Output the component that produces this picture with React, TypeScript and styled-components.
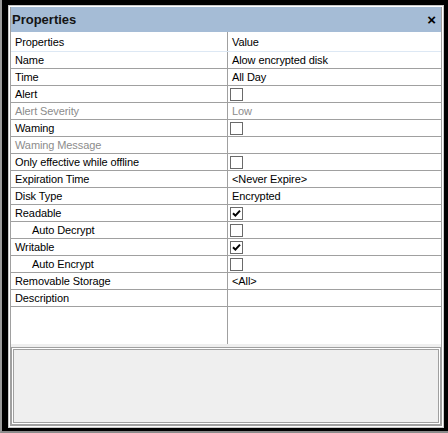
import React from 'react'
import styled, { createGlobalStyle } from 'styled-components'

const GlobalStyle = createGlobalStyle`
  html, body {
    margin: 0;
    padding: 0;
    background: #000;
  }
  body {
    font-family: "Liberation Sans", Arial, sans-serif;
    font-size: 11px;
  }
`

interface Row {
  label: string
  value?: string
  check?: boolean
  disabled?: boolean
  indent?: boolean
}

const rows: Row[] = [
  { label: 'Name', value: 'Alow encrypted disk' },
  { label: 'Time', value: 'All Day' },
  { label: 'Alert', check: false },
  { label: 'Alert Severity', value: 'Low', disabled: true },
  { label: 'Waming', check: false },
  { label: 'Waming Message', value: '', disabled: true },
  { label: 'Only effective while offline', check: false },
  { label: 'Expiration Time', value: '<Never Expire>' },
  { label: 'Disk Type', value: 'Encrypted' },
  { label: 'Readable', check: true },
  { label: 'Auto Decrypt', check: false, indent: true },
  { label: 'Writable', check: true },
  { label: 'Auto Encrypt', check: false, indent: true },
  { label: 'Removable Storage', value: '<All>' },
  { label: 'Description', value: '' },
]

const Window = styled.div`
  box-sizing: border-box;
  width: 448px;
  height: 433px;
  background: #000;
  border-left: 2px solid #9a9a9a;
  border-bottom: 2px solid #8a8a8a;
  padding: 5px 4px 3px 6px;
  display: flex;
`

const Frame = styled.div`
  flex: 1;
  display: flex;
  border: 1px solid #c8c8c8;
  background: #fff;
  padding: 1px;
`

const Panel = styled.div`
  flex: 1;
  display: flex;
  flex-direction: column;
  border-left: 1px solid #a0a0a0;
  border-right: 1px solid #a0a0a0;
  border-bottom: 1px solid #a0a0a0;
  background: #fff;
`

const TitleBar = styled.div`
  height: 25px;
  background: #a5bcd6;
  display: flex;
  align-items: center;
  justify-content: space-between;
  padding: 0 5px 0 1px;
  font-weight: bold;
  font-size: 13px;
  color: #141414;
`

const Close = styled.span`
  font-size: 15px;
  font-weight: bold;
  line-height: 1;
  color: #000;
`

const Grid = styled.div`
  display: flex;
  flex-direction: column;
  height: 312px;
  background: linear-gradient(to right, transparent 216px, #a0a0a0 216px, #a0a0a0 217px, transparent 217px);
`

const HeaderRow = styled.div`
  display: grid;
  grid-template-columns: 217px 1fr;
  height: 20px;
  border-bottom: 1px solid #dde8f4;
  box-sizing: border-box;
  align-items: center;
  color: #1e1e1e;
`

const GridRow = styled.div`
  display: grid;
  grid-template-columns: 216px 1px 1fr;
  height: 17px;
  border-bottom: 1px solid #a0a0a0;
  box-sizing: border-box;
  align-items: center;
`

const Divider = styled.div`
  height: 100%;
  background: #a0a0a0;
`

const Label = styled.div<{ $disabled?: boolean; $indent?: boolean }>`
  padding-left: ${({ $indent }) => ($indent ? 21 : 4)}px;
  color: ${({ $disabled }) => ($disabled ? '#8c8c8c' : '#000')};
  white-space: nowrap;
  line-height: 16px;
  letter-spacing: -0.1px;
`

const Value = styled.div<{ $disabled?: boolean }>`
  padding-left: 4px;
  color: ${({ $disabled }) => ($disabled ? '#8c8c8c' : '#000')};
  white-space: nowrap;
  line-height: 16px;
  letter-spacing: -0.1px;
  display: flex;
  align-items: center;
`

const Box = styled.span`
  box-sizing: border-box;
  width: 13px;
  height: 13px;
  margin-left: -2px;
  border: 1px solid #6a6a6a;
  background: #fff;
  display: inline-flex;
  align-items: center;
  justify-content: center;
`

const DescArea = styled.div`
  flex: 1;
  background: #efefef;
  padding: 4px 1px 1px 1px;
  display: flex;
`

const DescBox = styled.div`
  flex: 1;
  border: 1px solid #a0a0a0;
  outline: 1px solid #fff;
  box-shadow: 0 0 0 2px #a0a0a0;
  margin: 1px;
`

const Check: React.FC<{ checked: boolean }> = ({ checked }) => (
  <Box>
    {checked && (
      <svg width="9" height="9" viewBox="0 0 9 9">
        <path d="M1 4.2 L3.4 6.6 L8 1.6" fill="none" stroke="#000" strokeWidth="2" />
      </svg>
    )}
  </Box>
)

export default function App() {
  return (
    <>
      <GlobalStyle />
      <Window>
        <Frame>
          <Panel>
            <TitleBar>
              <span>Properties</span>
              <Close>×</Close>
            </TitleBar>
            <Grid>
              <HeaderRow>
                <Label>Properties</Label>
                <Value>Value</Value>
              </HeaderRow>
              {rows.map((r) => (
                <GridRow key={r.label}>
                  <Label $disabled={r.disabled} $indent={r.indent}>{r.label}</Label>
                  <Divider />
                  <Value $disabled={r.disabled}>
                    {r.check !== undefined ? <Check checked={r.check} /> : r.value}
                  </Value>
                </GridRow>
              ))}
            </Grid>
            <DescArea>
              <DescBox />
            </DescArea>
          </Panel>
        </Frame>
      </Window>
    </>
  )
}
